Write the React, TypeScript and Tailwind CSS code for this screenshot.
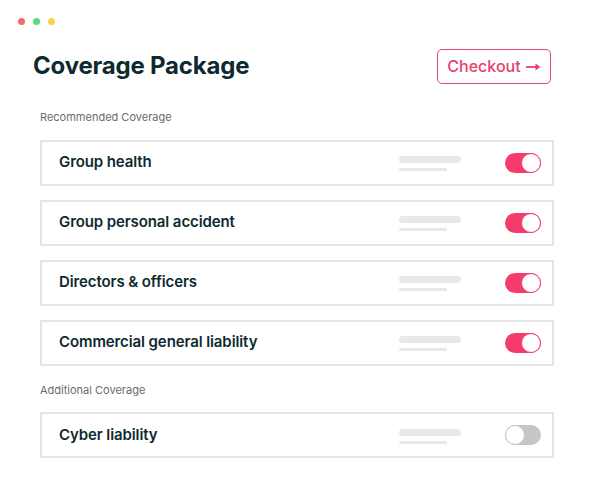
import React from "react";

type Item = { label: string; on: boolean };

const recommended: Item[] = [
  { label: "Group health", on: true },
  { label: "Group personal accident", on: true },
  { label: "Directors & officers", on: true },
  { label: "Commercial general liability", on: true },
];

function Toggle({ on }: { on: boolean }) {
  return on ? (
    <div className="flex h-[20px] w-[36px] items-center justify-end rounded-full bg-[#f53b6b]">
      <div className="h-[20px] w-[20px] rounded-full border-[1.5px] border-[#f53b6b] bg-white" />
    </div>
  ) : (
    <div className="flex h-[20px] w-[36px] items-center justify-start rounded-full bg-[#c6c6c6]">
      <div className="h-[20px] w-[20px] rounded-full border-[1.5px] border-[#c6c6c6] bg-white" />
    </div>
  );
}

function Row({ item }: { item: Item }) {
  return (
    <div className="flex h-[46px] items-center border-2 border-[#e4e4e4] bg-white pl-[17px] pr-[11px]">
      <div className="flex-1 text-[15px] font-semibold tracking-[-0.1px] text-[#0e2a30]">{item.label}</div>
      <div className="mr-[44px] flex flex-col gap-[5px] pt-[2px]">
        <div className="h-[7px] w-[62px] rounded-full bg-[#e8e8e8]" />
        <div className="h-[3px] w-[48px] rounded-full bg-[#e8e8e8]" />
      </div>
      <Toggle on={item.on} />
    </div>
  );
}

export default function App() {
  return (
    <div
      className="h-[503px] w-[595px] bg-white"
      style={{ fontFamily: "Inter, 'Noto Sans', sans-serif" }}
    >
      <div className="flex gap-[8px] pl-[18px] pt-[18px]">
        <div className="h-[7px] w-[7px] rounded-full bg-[#f26b6b]" />
        <div className="h-[7px] w-[7px] rounded-full bg-[#5fd97a]" />
        <div className="h-[7px] w-[7px] rounded-full bg-[#fbcf4a]" />
      </div>
      <div className="flex items-center justify-between pl-[33px] pr-[44px] pt-[23px]">
        <h1 className="text-[24px] font-bold tracking-[-0.2px] text-[#0e2a30]">Coverage Package</h1>
        <button className="flex h-[35px] w-[114px] items-center justify-center gap-[5px] rounded-[5px] border border-[#e0457a] text-[16px] font-medium text-[#e8406f]">
          Checkout
          <svg width="15" height="10" viewBox="0 0 15 10" className="mt-[1px]">
            <path d="M0 5 H11" stroke="#e8406f" strokeWidth="1.8" />
            <path d="M9.5 1.5 L14.5 5 L9.5 8.5 Z" fill="#e8406f" />
          </svg>
        </button>
      </div>
      <div className="px-[40px] pr-[41px]">
        <div className="mt-[25px] text-[11px] text-[#6b6b6b]">Recommended Coverage</div>
        <div className="mt-[14px] flex flex-col gap-[14px]">
          {recommended.map((it) => (
            <Row key={it.label} item={it} />
          ))}
        </div>
        <div className="mt-[16px] text-[11px] text-[#6b6b6b]">Additional Coverage</div>
        <div className="mt-[14px]">
          <Row item={{ label: "Cyber liability", on: false }} />
        </div>
      </div>
    </div>
  );
}
